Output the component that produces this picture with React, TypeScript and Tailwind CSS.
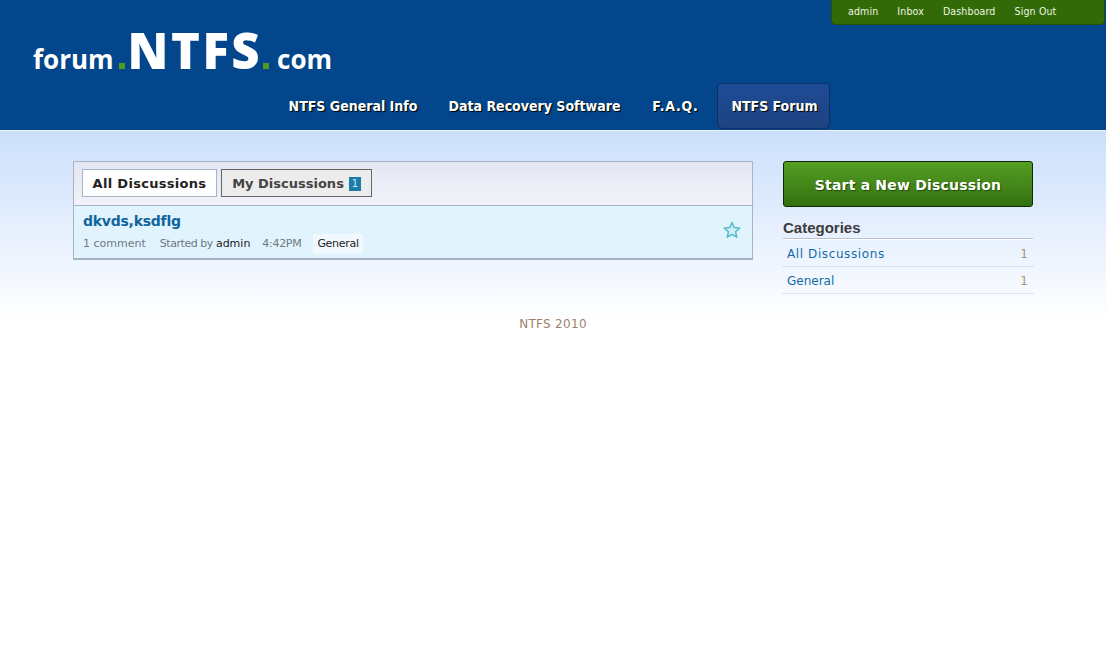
const NAV = [
  { label: 'NTFS General Info', width: 'w-[160px]', extra: '' },
  { label: 'Data Recovery Software', width: 'w-[203px]', extra: '' },
  { label: 'F.A.Q.', width: 'w-[79px]', extra: 'tracking-[0.8px]' },
  {
    label: 'NTFS Forum',
    width: 'w-[113px]',
    extra: 'pl-[2px] rounded-[5px] border border-[#0c2f66] bg-gradient-to-b from-[#1f4c97] to-[#1d4381] ml-[2px]',
  },
];

const USER_LINKS = ['admin', 'Inbox', 'Dashboard', 'Sign Out'];

const CATEGORIES = [
  { name: 'All Discussions', count: 1, spacing: 'tracking-[0.6px]' },
  { name: 'General', count: 1, spacing: '' },
];

function Dot() {
  return <span className="inline-block w-[6px] h-[6px] bg-[#4f9a1f]" />;
}

function Logo() {
  return (
    <div className="ml-[33px] h-[58px] flex items-baseline font-['Open_Sans',sans-serif] font-bold text-white leading-none pt-[1px]">
      <span className="text-[26px]">forum</span>
      <span className="ml-[5px]"><Dot /></span>
      <span className="text-[49px] font-extrabold tracking-[2.5px] ml-[3px]">NTFS</span>
      <span className="ml-[1px]"><Dot /></span>
      <span className="text-[26px] ml-[8px]">com</span>
    </div>
  );
}

function Header() {
  return (
    <header className="h-[131px] bg-[#03468c] border-b border-[#f0f4fa] flex flex-col">
      <div className="flex justify-end">
        <div className="w-[274px] h-[25px] mr-[1px] rounded-b-[5px] bg-[#336a08] border border-t-0 border-[#254f08] flex items-start pl-[16px] pt-[4px] gap-[19px] text-[10.5px] leading-[15px] tracking-[0.15px] text-[#eef5e2] font-['DejaVu_Sans_Condensed','DejaVu_Sans',sans-serif] [font-stretch:condensed]">
          {USER_LINKS.map(link => (
            <span key={link}>{link}</span>
          ))}
        </div>
      </div>
      <Logo />
      <nav className="ml-[273px] flex text-white font-['DejaVu_Sans_Condensed','DejaVu_Sans',sans-serif] [font-stretch:condensed] font-bold text-[14px]">
        {NAV.map(item => (
          <div
            key={item.label}
            className={`${item.width} ${item.extra} h-[46px] flex items-center justify-center [text-shadow:1px_1px_1px_#000]`}
          >
            {item.label}
          </div>
        ))}
      </nav>
    </header>
  );
}

function DiscussionList() {
  return (
    <div className="w-[680px] border border-[#a7b3c6] border-b-2">
      <div className="h-[44px] bg-gradient-to-b from-[#e3e7f3] to-[#f2f3f9] border-b border-[#a7b3c6] flex items-start pt-[7px] pl-[8px] gap-[4px] font-['DejaVu_Sans',sans-serif] font-bold text-[13px]">
        <div className="w-[135px] h-[28px] pt-[1px] bg-white border border-[#a7b3c6] flex items-center justify-center text-[#222222] tracking-[0.3px]">
          All Discussions
        </div>
        <div className="w-[151px] h-[28px] pt-[1px] bg-[#ececec] border border-[#666666] flex items-center justify-center gap-[5px] text-[#444444]">
          My Discussions
          <span className="w-[12px] h-[14px] bg-[#1a7ba8] text-[#cfe8f4] font-normal text-[10px] leading-[14px] text-center">1</span>
        </div>
      </div>
      <div className="h-[52px] bg-[#e1f3fd] flex justify-between pl-[9px] pr-[11px] font-['DejaVu_Sans',sans-serif]">
        <div>
          <div className="pt-[5px] text-[14px] leading-[20px] font-bold text-[#0f669c] tracking-[-0.25px]">dkvds,ksdflg</div>
          <div className="mt-[3px] flex items-center text-[11px] leading-[19px] text-[#6f7a85]">
            <span>1 comment</span>
            <span className="ml-[14px] tracking-[-0.45px]">Started by</span>
            <span className="ml-[3px] text-[#222222]">admin</span>
            <span className="ml-[12px] tracking-[-0.3px]">4:42PM</span>
            <span className="ml-[12px] px-[4px] bg-[#f1f9fe] text-[#222222] tracking-[-0.3px]">General</span>
          </div>
        </div>
        <svg width="18" height="18" viewBox="0 0 18 18" className="mt-[15px]">
          <path
            d="M9 1.5 L11.2 6.6 L16.7 7.1 L12.5 10.7 L13.8 16.2 L9 13.3 L4.2 16.2 L5.5 10.7 L1.3 7.1 L6.8 6.6 Z"
            fill="#d3f0f8"
            stroke="#55bccb"
            strokeWidth="1.5"
            strokeLinejoin="round"
          />
        </svg>
      </div>
    </div>
  );
}

function Sidebar() {
  return (
    <aside className="w-[250px] font-['DejaVu_Sans',sans-serif]">
      <div className="h-[46px] pt-[2px] rounded-[3px] border border-[#12280a] bg-gradient-to-b from-[#559f24] to-[#33710f] flex items-center justify-center text-white font-bold text-[14px] tracking-[0.2px] [text-shadow:1px_1px_1px_#1f4a08]">
        Start a New Discussion
      </div>
      <h4 className="mt-[12px] font-['Liberation_Sans',sans-serif] font-bold text-[15px] leading-[18px] text-[#3c3c3c] pb-[1px] border-b border-[#b8c1d3]">
        Categories
      </h4>
      <ul className="text-[12px] border-t border-white">
        {CATEGORIES.map(cat => (
          <li key={cat.name} className="h-[27px] pt-[2px] flex items-center justify-between pl-[4px] pr-[5px] border-b border-dotted border-[#c8ced8]">
            <span className={`text-[#126cab] ${cat.spacing}`}>{cat.name}</span>
            <span className="text-[#a8927c] pl-[1px]">{cat.count}</span>
          </li>
        ))}
      </ul>
    </aside>
  );
}

export default function App() {
  return (
    <div className="min-h-[667px] bg-white">
      <Header />
      <div className="h-[190px] bg-gradient-to-b from-[#cbdffb] to-white">
        <main className="h-[163px] px-[73px] pt-[30px] flex items-start justify-between">
          <DiscussionList />
          <Sidebar />
        </main>
        <footer className="mt-[21px] text-center text-[12px] leading-[18px] tracking-[0.3px] text-[#9c7f70] font-['DejaVu_Sans',sans-serif]">
          NTFS 2010
        </footer>
      </div>
    </div>
  );
}
